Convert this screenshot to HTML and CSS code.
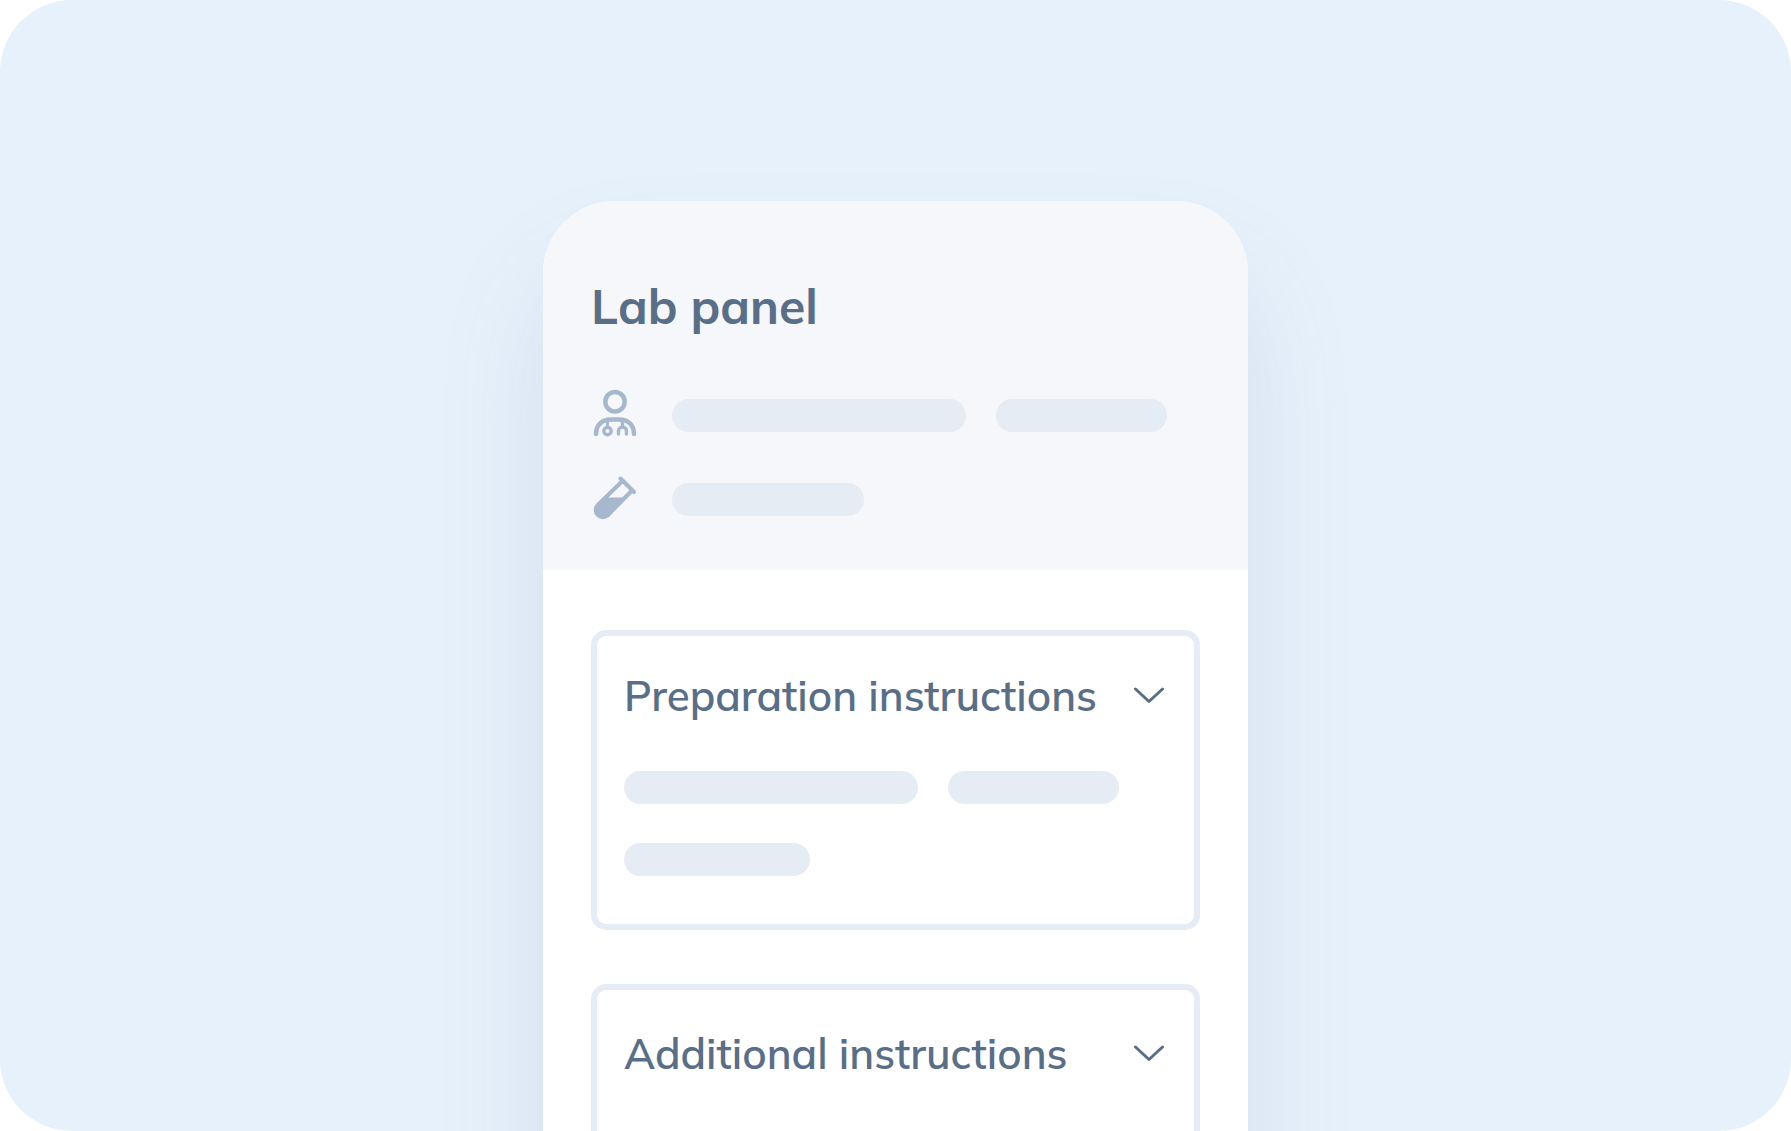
FILE: index.html
```html
<!DOCTYPE html>
<html lang="en">
<head>
  <meta charset="UTF-8" />
  <meta name="viewport" content="width=device-width, initial-scale=1.0" />
  <title>Lab panel</title>
  <link rel="stylesheet" href="styles.css">
</head>
<body>

  <main class="stage">
    <article class="card">

      <header class="card-header">
        <h1>Lab panel</h1>

        <div class="info-row">
          <!-- Doctor -->
          <svg class="info-icon" viewBox="0 0 48 48" fill="none" stroke="currentColor" stroke-linecap="round" aria-hidden="true">
            <circle cx="24" cy="10.800" r="9.700" stroke-width="4.500" />
            <path d="M5 43C5 34 11 28.500 20 28.500H28C37 28.500 43 34 43 43" stroke-width="4.500" />
            <path d="M16.500 29.500V35.500" stroke-width="3" />
            <circle cx="16.500" cy="40" r="3.700" stroke-width="3.400" />
            <path d="M31.500 29.500V35.500M27.500 43V40A4 4 0 0 1 35.500 40V43" stroke-width="3.400" />
          </svg>
          <div class="bars">
            <span class="bar bar-long"></span>
            <span class="bar bar-medium"></span>
          </div>
        </div>

        <div class="info-row">
          <!-- Test tube -->
          <svg class="info-icon" viewBox="0 0 48 48" fill="none" stroke="currentColor" stroke-linejoin="round" stroke-linecap="round" aria-hidden="true">
            <path d="M29.500 3.500L43 17" stroke-width="4" />
            <path d="M31.500 6L6.500 30.200A7.200 7.200 0 0 0 16.500 40.500L41 15.500" stroke-width="4" />
            <path d="M14.500 22.500H34.500L16.500 40.500A7.200 7.200 0 0 1 6.500 30.200Z" fill="currentColor" stroke="none" />
          </svg>
          <div class="bars">
            <span class="bar bar-short"></span>
          </div>
        </div>
      </header>

      <div class="card-body">
        <section class="panel">
          <button class="panel-toggle" type="button" aria-expanded="true">
            <span>Preparation instructions</span>
            <svg class="chevron" viewBox="0 0 30 18" fill="none" stroke="currentColor" stroke-width="3" stroke-linecap="round" stroke-linejoin="round" aria-hidden="true">
              <path d="M1.500 2L15 14.500L28.500 2" />
            </svg>
          </button>
          <div class="panel-content">
            <div class="bars">
              <span class="bar bar-long"></span>
              <span class="bar bar-medium"></span>
            </div>
            <div class="bars">
              <span class="bar bar-short"></span>
            </div>
          </div>
        </section>

        <section class="panel panel-additional">
          <button class="panel-toggle" type="button" aria-expanded="false">
            <span>Additional instructions</span>
            <svg class="chevron" viewBox="0 0 30 18" fill="none" stroke="currentColor" stroke-width="3" stroke-linecap="round" stroke-linejoin="round" aria-hidden="true">
              <path d="M1.500 2L15 14.500L28.500 2" />
            </svg>
          </button>
        </section>
      </div>

    </article>
  </main>

</body>
</html>
```
FILE: styles.css
```css
* {
  box-sizing: border-box;
}

body {
  margin: 0;
  background: #fff;
  color: #596e87;
  font-family: Mulish, Lato, sans-serif;
}

.stage {
  display: flex;
  justify-content: center;
  height: 100vh;
  padding: 201px 24px 0;
  border-radius: 72px;
  background: #e6f1fb;
  overflow: hidden;
}

.card {
  width: 100%;
  max-width: 705px;
  height: max-content;
  border-radius: 72px;
  background: #fff;
  box-shadow: 0 72px 108px rgba(89, 110, 145, 0.13);
}

.card-header {
  padding: 75px 48px 41px;
  border-radius: 72px 72px 0 0;
  background: #f5f7fb;
}

h1 {
  margin: 0 0 49px;
  font-size: 48px;
  line-height: 60px;
  font-weight: 700;
}

.info-row {
  display: flex;
  align-items: center;
  gap: 33px;
  height: 60px;
}

.info-row + .info-row {
  margin-top: 24px;
}

.info-icon {
  flex: none;
  width: 48px;
  height: 48px;
  color: #a6b7ce;
  overflow: visible;
}

.bars {
  display: flex;
  flex: 1;
  gap: 30px;
}

.bar {
  height: 33px;
  border-radius: 17px;
  background: #e5ecf4;
}

.bar-long {
  width: 294px;
}

.bar-medium {
  width: 171px;
}

.bar-short {
  width: 192px;
}

.card-body {
  display: flex;
  flex-direction: column;
  gap: 54px;
  padding: 60px 48px;
}

.panel {
  min-height: 300px;
  padding: 36px 27px 48px;
  border: 6px solid #e5ecf5;
  border-radius: 15px;
}

.panel-additional {
  padding-top: 40px;
}

.panel-toggle {
  display: flex;
  align-items: center;
  justify-content: space-between;
  width: 100%;
  padding: 0 3px 0 0;
  border: none;
  background: none;
  color: inherit;
  font-family: inherit;
  font-size: 42px;
  line-height: 48px;
  font-weight: 600;
  text-align: left;
  cursor: pointer;
}

.chevron {
  flex: none;
  width: 30px;
  height: 18px;
}

.panel-content {
  display: flex;
  flex-direction: column;
  gap: 39px;
  margin-top: 51px;
}

.panel-content .bar-short {
  width: 186px;
}
```
